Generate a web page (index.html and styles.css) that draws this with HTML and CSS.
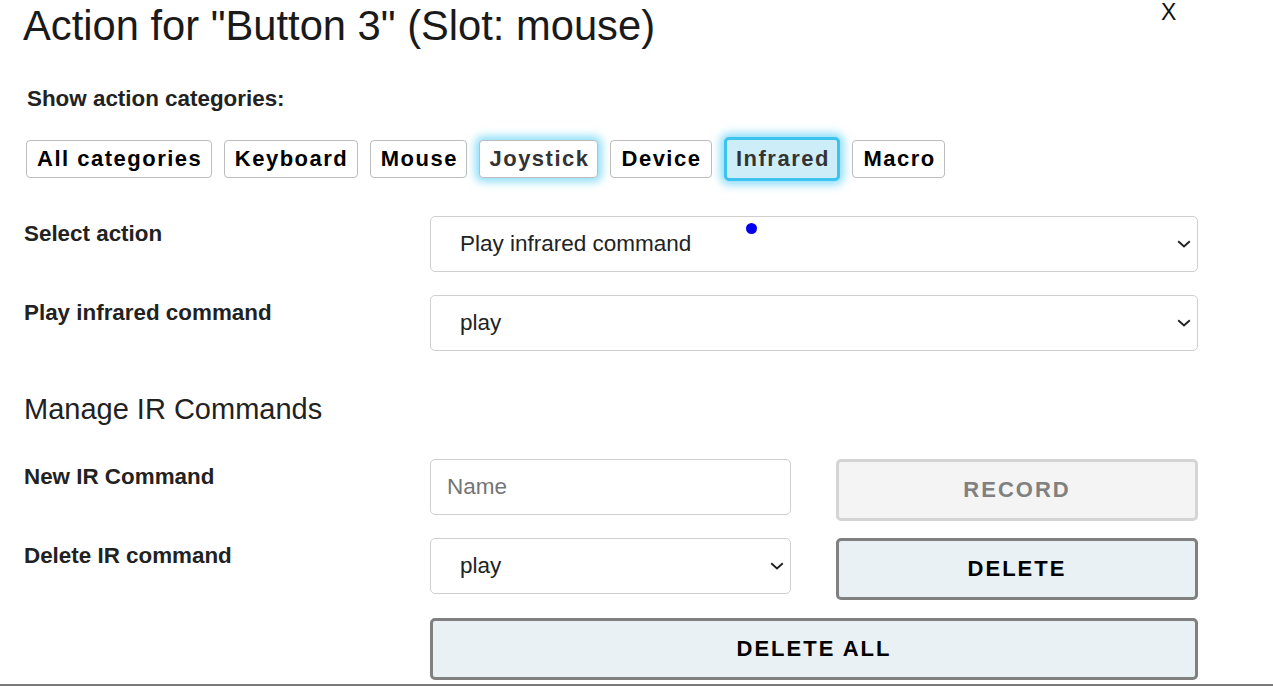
FILE: index.html
```html
<!DOCTYPE html>
<html lang="en">
<head>
<meta charset="utf-8">
<title>Action for Button 3</title>
<link rel="stylesheet" href="styles.css">
</head>
<body>
<div class="dialog">
  <div class="close">X</div>
  <h1 class="title">Action for "Button 3" (Slot: mouse)</h1>

  <div class="cat-label">Show action categories:</div>
  <div class="cats">
    <button class="cat">All categories</button>
    <button class="cat">Keyboard</button>
    <button class="cat">Mouse</button>
    <button class="cat cat-glow">Joystick</button>
    <button class="cat cat-wide">Device</button>
    <button class="cat cat-active">Infrared</button>
    <button class="cat">Macro</button>
  </div>

  <div class="row row-first">
    <div class="label">Select action</div>
    <div class="control">
      <div class="select wide"><span>Play infrared command</span><svg class="chev" viewBox="0 0 14 8"><path d="M1.2 1.2 L7 6.4 L12.8 1.2" fill="none" stroke="#222" stroke-width="1.9"/></svg></div>
      <span class="dot"></span>
    </div>
  </div>

  <div class="row">
    <div class="label">Play infrared command</div>
    <div class="control">
      <div class="select wide"><span>play</span><svg class="chev" viewBox="0 0 14 8"><path d="M1.2 1.2 L7 6.4 L12.8 1.2" fill="none" stroke="#222" stroke-width="1.9"/></svg></div>
    </div>
  </div>

  <h2 class="section">Manage IR Commands</h2>

  <div class="row row-manage">
    <div class="label">New IR Command</div>
    <div class="control split">
      <div class="input"><span class="ph">Name</span></div>
      <button class="btn btn-disabled">RECORD</button>
    </div>
  </div>

  <div class="row row-del">
    <div class="label">Delete IR command</div>
    <div class="control split">
      <div class="select"><span>play</span><svg class="chev" viewBox="0 0 14 8"><path d="M1.2 1.2 L7 6.4 L12.8 1.2" fill="none" stroke="#222" stroke-width="1.9"/></svg></div>
      <button class="btn">DELETE</button>
    </div>
  </div>

  <div class="row row-last">
    <div class="label"></div>
    <div class="control">
      <button class="btn btn-all">DELETE ALL</button>
    </div>
  </div>
</div>
<div class="bottom-rule"></div>
</body>
</html>
```

FILE: styles.css
```css
html, body {
  margin: 0;
  padding: 0;
  background: #fff;
  overflow: hidden;
}
body {
  width: 1273px;
  height: 687px;
  font-family: "Liberation Sans", Arial, sans-serif;
  color: #222;
  position: relative;
}
.dialog {
  position: relative;
  padding: 0 0 0 24px;
  height: 684px;
}
.close {
  position: absolute;
  left: 1161px;
  top: 0;
  font-size: 23px;
  line-height: 25px;
  color: #111;
}
.title {
  margin: 0 0 0 -1px;
  padding-top: 3px;
  font-size: 41.7px;
  line-height: 46px;
  font-weight: normal;
  color: #1a1a1a;
}
.cat-label {
  margin-top: 37px;
  margin-left: 3px;
  font-size: 22.4px;
  line-height: 26px;
  font-weight: bold;
  color: #222;
}
.cats {
  display: flex;
  align-items: flex-start;
  gap: 12px;
  height: 38px;
  margin-top: 28px;
  margin-left: 2px;
}
.cat {
  font-family: "Liberation Sans", Arial, sans-serif;
  font-size: 22px;
  font-weight: bold;
  letter-spacing: 1.5px;
  color: #000;
  background: #fff;
  border: 1px solid #bdbdbd;
  border-radius: 4px;
  height: 38px;
  padding: 0 8.5px 0 10px;
  line-height: 36px;
}
.cat-wide {
  padding: 0 9.5px 0 10.5px;
}
.cat-glow {
  color: #333;
  padding: 0 7.5px 0 9px;
  box-shadow: 0 0 8px 4px rgba(70, 200, 245, 0.6);
}
.cat-active {
  color: #333;
  background: #cdeef9;
  border: 3px solid #3cc3ef;
  border-radius: 5px;
  box-shadow: 0 0 8px 4px rgba(70, 200, 245, 0.6);
  padding: 0 7.5px 0 9px;
  line-height: 38px;
  height: 44px;
  margin-top: -3px;
}
.row {
  display: flex;
  margin-top: 23px;
}
.row-first {
  margin-top: 38px;
}
.label {
  width: 406px;
  flex: none;
  font-size: 22.4px;
  font-weight: bold;
  line-height: 26px;
  padding-top: 5px;
  color: #222;
}
.control {
  width: 768px;
  position: relative;
}
.split {
  display: flex;
  gap: 45px;
}
.select, .input {
  box-sizing: border-box;
  height: 56px;
  border: 1px solid #cfcfcf;
  border-radius: 5px;
  display: flex;
  align-items: center;
  font-size: 22.5px;
  color: #222;
  background: #fff;
  position: relative;
}
.select {
  padding-left: 29px;
}
.select.wide {
  width: 768px;
}
.split .select, .split .input {
  width: 361px;
  flex: none;
}
.input {
  padding-left: 16px;
}
.ph {
  color: #757575;
}
.chev {
  position: absolute;
  right: 6px;
  top: 23px;
  width: 14px;
  height: 8px;
}
.dot {
  position: absolute;
  left: 316px;
  top: 7px;
  width: 11px;
  height: 11px;
  border-radius: 50%;
  background: #0000ee;
}
.section {
  margin: 41px 0 0 0;
  font-size: 29px;
  line-height: 34px;
  font-weight: normal;
  color: #222;
}
.row-manage {
  margin-top: 33px;
}
.row-del {
  margin-top: 17px;
}
.row-last {
  margin-top: 18px;
}
.btn {
  box-sizing: border-box;
  width: 362px;
  height: 62px;
  flex: none;
  font-family: "Liberation Sans", Arial, sans-serif;
  font-size: 22px;
  font-weight: bold;
  letter-spacing: 2px;
  background: #e9f1f5;
  color: #000;
  border: 3px solid #808080;
  border-radius: 5px;
}
.btn-disabled {
  background: #f4f4f4;
  border-color: #d4d4d4;
  color: #808080;
}
.btn-all {
  width: 768px;
}
.bottom-rule {
  position: absolute;
  left: 0;
  right: 0;
  top: 684px;
  height: 2px;
  background: #7a7a7a;
}
```
